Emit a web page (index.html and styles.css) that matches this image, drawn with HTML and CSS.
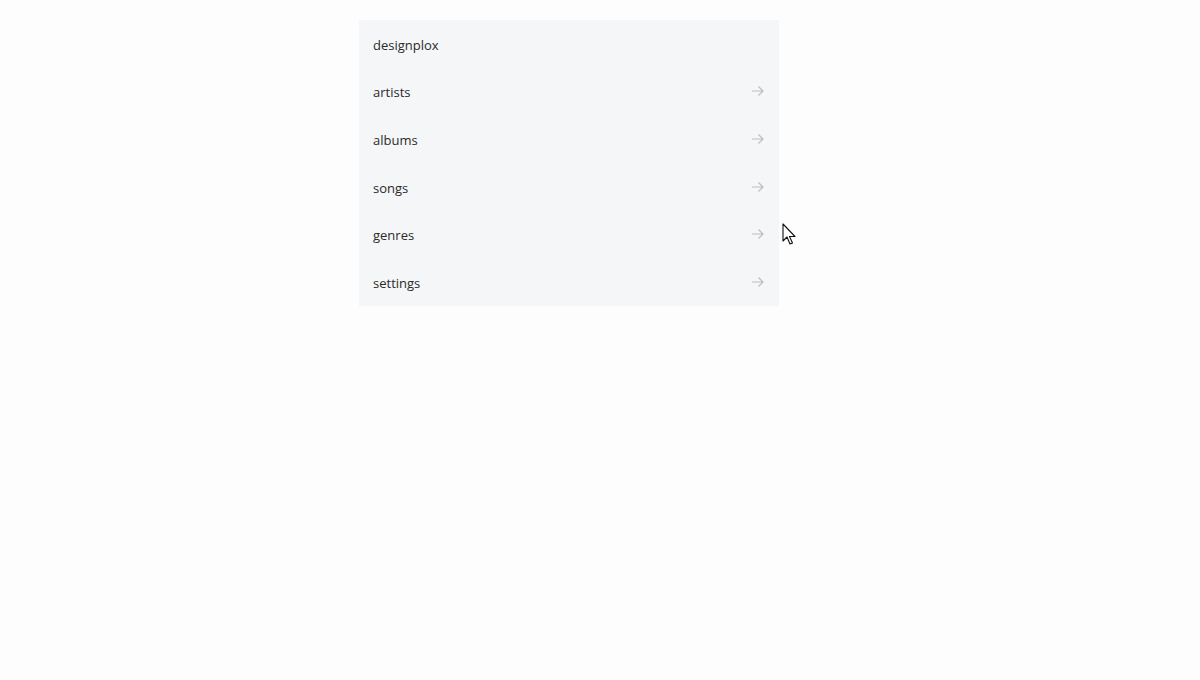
FILE: index.html
```html
<!DOCTYPE html>
<html lang="en">
<head>
  <meta charset="UTF-8" />
  <meta name="viewport" content="width=device-width, initial-scale=1" />
  <title>designplox</title>
  <link rel="stylesheet" href="styles.css">
</head>
<body>

  <div id="nav">
    <div class="item title">designplox</div>
    <a class="item" href="#artists">artists <span class="arrow"><svg width="14" height="12" viewBox="0 0 14 12"><path d="M1 6h11M7.5 1.5L12 6l-4.5 4.5" fill="none" stroke="currentColor" stroke-width="1.2"/></svg></span></a>
    <a class="item" href="#albums">albums <span class="arrow"><svg width="14" height="12" viewBox="0 0 14 12"><path d="M1 6h11M7.5 1.5L12 6l-4.5 4.5" fill="none" stroke="currentColor" stroke-width="1.2"/></svg></span></a>
    <a class="item" href="#songs">songs <span class="arrow"><svg width="14" height="12" viewBox="0 0 14 12"><path d="M1 6h11M7.5 1.5L12 6l-4.5 4.5" fill="none" stroke="currentColor" stroke-width="1.2"/></svg></span></a>
    <a class="item" href="#genres">genres <span class="arrow"><svg width="14" height="12" viewBox="0 0 14 12"><path d="M1 6h11M7.5 1.5L12 6l-4.5 4.5" fill="none" stroke="currentColor" stroke-width="1.2"/></svg></span></a>
    <a class="item" href="#settings">settings <span class="arrow"><svg width="14" height="12" viewBox="0 0 14 12"><path d="M1 6h11M7.5 1.5L12 6l-4.5 4.5" fill="none" stroke="currentColor" stroke-width="1.2"/></svg></span></a>

    <svg class="cursor" width="14" height="22" viewBox="0 0 14 22"><path d="M1 1v17l4-4 3 7 2.5-1-3-6.5h5.5z" fill="#fff" stroke="#111" stroke-width="1.1" stroke-linejoin="round"/></svg>
  </div>

</body>
</html>
```

FILE: styles.css
```css
body {
  margin: 0;
  padding: 20px 0 0 359px;
  background: #fdfdfd;
  font-family: "Open Sans", "Noto Sans", sans-serif;
  font-size: 13px;
  color: #2a2a2a;
}

#nav {
  position: relative;
  width: 420px;
  background: #f5f6f8;
}

#nav .item {
  box-sizing: border-box;
  display: flex;
  align-items: center;
  justify-content: space-between;
  height: 47.6px;
  padding: 2px 14px 0;
  color: #2a2a2a;
  text-decoration: none;
}

#nav .arrow {
  display: flex;
  color: #bdbdbd;
  margin-top: -2px;
}

.cursor {
  position: absolute;
  left: 423px;
  top: 203px;
}
```
